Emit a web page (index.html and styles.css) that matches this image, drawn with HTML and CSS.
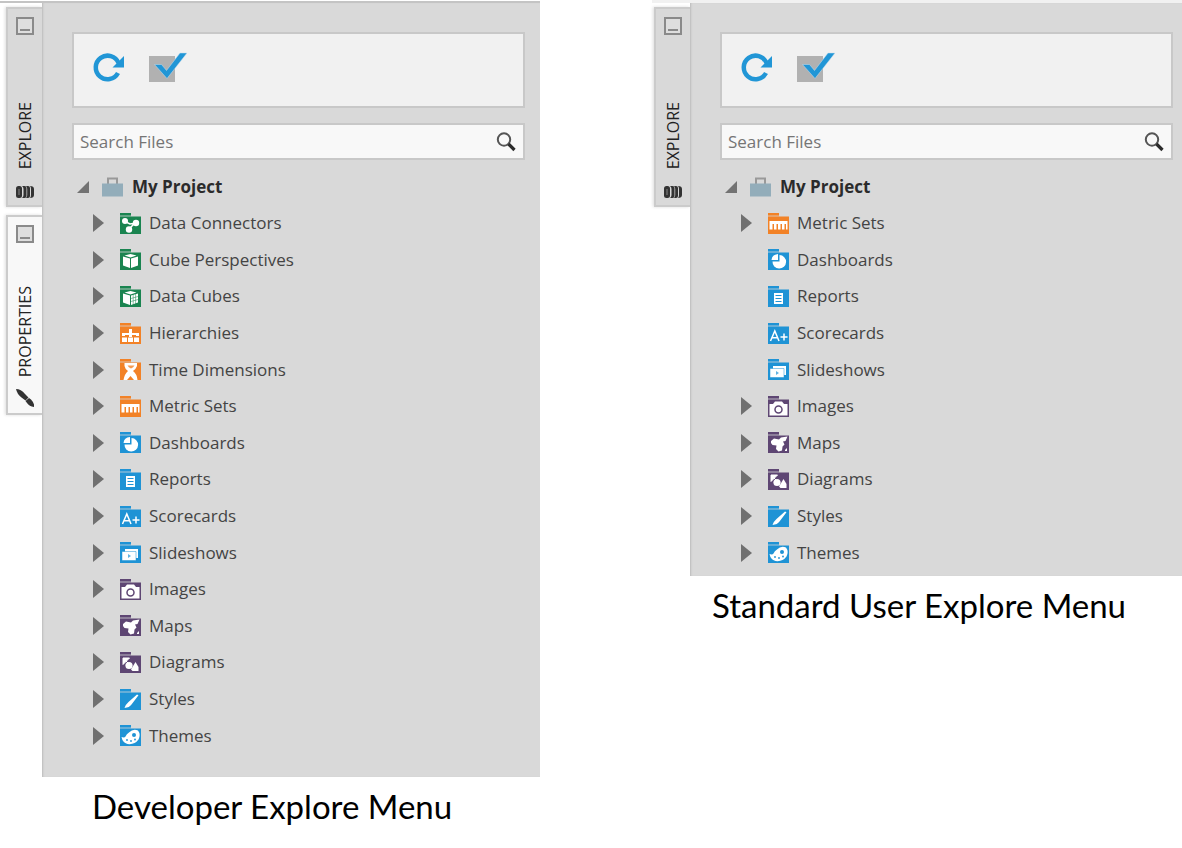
FILE: index.html
```html
<!DOCTYPE html>
<html lang="en">
<head>
<meta charset="utf-8">
<title>Explore Menu</title>
<link rel="stylesheet" href="styles.css">
</head>
<body>
<svg class="sprite" aria-hidden="true">
  <symbol id="minimize" viewBox="0 0 18 18"><path d="M1 1h16v16H1z" fill="#dedede" stroke="#8a8a8a" stroke-width="2"/><path d="M4 13h10" stroke="#8a8a8a" stroke-width="2"/></symbol>
  <symbol id="stack" viewBox="0 0 18 18"><rect x="0" y="5" width="6" height="12" rx="2.500" fill="#333"/><path d="M3 8v6" stroke="#888" stroke-width="1"/><path d="M6 5h2.500q2 0 2 2v8q0 2-2 2H6q1.500-1 1.500-3V8Q7.500 6 6 5zM10 5h2q2 0 2 2v8q0 2-2 2h-2q1.200-1 1.200-3V8q0-2-1.200-3zM14 5q4 0 4 3v6q0 3-4 3 1-1 1-3V8q0-2-1-3z" fill="#333"/></symbol>
  <symbol id="pen" viewBox="0 0 18 18"><path d="M0 0q5 0 9 5l3.500 3.500-3 3-4-3Q1 5 0 0zM13 9l2 1.500q3 3 3.500 7.500-5-.500-7.500-4l-1.500-2z" fill="#333"/></symbol>
  <symbol id="refresh" viewBox="0 0 32 32"><path d="M25.500 12A11.800 11.800 0 1 0 25 22" fill="none" stroke="#2196d6" stroke-width="4.500"/><path d="M31 5v11.500H19.500z" fill="#2196d6"/></symbol>
  <symbol id="check" viewBox="0 0 38 32"><path d="M0 5h26v26H0z" fill="#b1b1b1"/><path d="M5.500 13.500h7l5 6L31 2h7L18 27.500z" fill="#2196d6" stroke="#c5dfee" stroke-width=".5"/></symbol>
  <symbol id="search" viewBox="0 0 20 20"><circle cx="8" cy="7.500" r="6.200" fill="none" stroke="#555" stroke-width="2"/><path d="M12.500 12l6 6" stroke="#2b2b2b" stroke-width="3.200"/></symbol>
  <symbol id="expanded" viewBox="0 0 12 12"><path d="M12 0v12H0z" fill="#737373"/></symbol>
  <symbol id="collapsed" viewBox="0 0 11 18"><path d="M0 0l11 9-11 9z" fill="#707070"/></symbol>
  <symbol id="project" viewBox="0 0 21 21"><path d="M6 7V1.500h9V7" fill="none" stroke="#999" stroke-width="2"/><path d="M0 6.500h21v13H0z" fill="#93adba"/></symbol>
  <symbol id="folder" viewBox="0 0 21 21"><path d="M0 0h11v2.500H0zM0 3.500h21V21H0z" fill="currentColor"/><path d="M0 2.500h11v1H0z" fill="currentColor" opacity=".45"/></symbol>
  <symbol id="connectors" viewBox="0 0 21 21"><use href="#folder"/><path d="M5 8.500l5 2.500 6-1M14 11l-5 5" stroke="#fff" stroke-width="1.500" fill="none"/><g fill="#fff"><circle cx="5" cy="8" r="3"/><circle cx="16" cy="10" r="3.200"/><circle cx="9" cy="16.500" r="3.200"/></g></symbol>
  <symbol id="perspectives" viewBox="0 0 21 21"><use href="#folder"/><path d="M3 7.500L10 9.500v9.500L3 16.500zM18 7.500L11 9.500v9.500l7-2.500zM4.500 6.500L10.500 5l6 1.500-6 2z" fill="#fff"/></symbol>
  <symbol id="cubes" viewBox="0 0 21 21"><use href="#folder"/><path d="M3 7.500L10 9.500v9.500L3 16.500zM18 7.500L11 9.500v9.500l7-2.500zM4.500 6.500L10.500 5l6 1.500-6 2z" fill="#fff"/><path d="M13.200 8v11M15.600 8v10M11 12.500l7-2M11 15.500l7-2" stroke="currentColor" stroke-width=".5"/></symbol>
  <symbol id="hierarchies" viewBox="0 0 21 21"><use href="#folder"/><path d="M9 6h3v4h7v3h-3v-1h-4v2H9v-2H5v1H2v-3h7zM2 14.500h5V19H2zM8 14.500h5V19H8zM14 14.500h5V19h-5z" fill="#fff"/></symbol>
  <symbol id="time" viewBox="0 0 21 21"><use href="#folder"/><path d="M4.500 4h12.500v3q-1 3-4 5 4 3 4.500 9H14l-3.500-4L7 21H3.500q1-6 4.500-9-3-2-3.500-5z" fill="#fff"/><path d="M7.500 6.500h7q-1 2-3.500 3-2.500-1-3.500-3z" fill="currentColor" opacity=".8"/></symbol>
  <symbol id="metrics" viewBox="0 0 21 21"><use href="#folder"/><path d="M1.500 8h18v8.500H18V11h-1.500v5.500H14V11h-1.500v5.500H10V11H8.500v5.500H6V11H4.500v5.500h-3z" fill="#fff"/></symbol>
  <symbol id="dashboards" viewBox="0 0 21 21"><use href="#folder"/><path d="M11.500 6v6.500H4.500a6.800 6.800 0 1 0 7-6.500z" fill="#fff"/><path d="M10 5v6H3.500Q4 5.500 10 5z" fill="#fff"/></symbol>
  <symbol id="reports" viewBox="0 0 21 21"><use href="#folder"/><path d="M6 7h9v11H6z" fill="#fff"/><path d="M7.500 9.500h6M7.500 12.500h6M7.500 15.500h6" stroke="currentColor"/></symbol>
  <symbol id="scorecards" viewBox="0 0 21 21"><use href="#folder"/><path d="M2.500 18L6.800 8l4.200 10M4.200 14.700h5.200M12.500 14h7M16 10.500v7" fill="none" stroke="#fff" stroke-width="1.500"/></symbol>
  <symbol id="slideshows" viewBox="0 0 21 21"><use href="#folder"/><path d="M5 7h13v9H5z" fill="#fff"/><path d="M2 9.500h14v9H2z" fill="#fff" stroke="currentColor" stroke-width=".5"/><path d="M8 12l3 2-3 2z" fill="currentColor" opacity=".7"/></symbol>
  <symbol id="images" viewBox="0 0 21 21"><use href="#folder"/><path d="M1.500 8H5l2-2.500h7L16 8h3.500v11.500h-18z" fill="#fff"/><circle cx="10.500" cy="13.500" r="3.500" fill="none" stroke="currentColor" stroke-width="1.500"/></symbol>
  <symbol id="maps" viewBox="0 0 21 21"><use href="#folder"/><path d="M3 9l3-2.500 5 1L13 5.500l6.500-1-2 4.500-2.500.500 1.500 3-2 2-.500 4-3.500 1-2.500-2.500.500-3.500-4-.500-1.500-2zM17 18l2-2v3h-2z" fill="#fff"/></symbol>
  <symbol id="diagrams" viewBox="0 0 21 21"><use href="#folder"/><path d="M3 6h6.500L3 12.500zM6 9l4 4" fill="#fff" stroke="#fff"/><circle cx="9" cy="13.500" r="3.600" fill="#fff"/><path d="M11 17.500l4.500-7.500 3 5v4h-6z" fill="#fff"/></symbol>
  <symbol id="styles" viewBox="0 0 21 21"><use href="#folder"/><path d="M17 5.500l1.500.8-7 9.200q-2 3-7 3.500 1.500-4 4-6z" fill="#fff"/></symbol>
  <symbol id="themes" viewBox="0 0 21 21"><use href="#folder"/><path d="M9 7.500q4-4 9-2 3 4 .500 9-4 5.500-11 4.500-5-1.500-6-7 3 1 4-.500 1-2.500 3.500-4z" fill="#fff"/><g fill="currentColor"><circle cx="14" cy="10" r="2"/><circle cx="7" cy="15" r=".9"/><circle cx="11" cy="16" r=".9"/><circle cx="15" cy="14.500" r=".9"/></g></symbol>
</svg>

<main class="comparison">
  <figure class="menu menu-developer">
    <div class="window">
      <nav class="tabs" aria-label="Developer panels">
        <button class="tab tab-active"><svg class="tab-icon"><use href="#minimize"/></svg><span class="tab-label">EXPLORE</span><svg class="tab-icon"><use href="#stack"/></svg></button>
        <button class="tab"><svg class="tab-icon"><use href="#minimize"/></svg><span class="tab-label">PROPERTIES</span><svg class="tab-icon"><use href="#pen"/></svg></button>
      </nav>
      <section class="panel">
        <div class="toolbar">
          <button class="tool" aria-label="Refresh"><svg class="tool-refresh"><use href="#refresh"/></svg></button>
          <button class="tool" aria-label="Select"><svg class="tool-check"><use href="#check"/></svg></button>
        </div>
        <div class="search"><input class="search-input" type="text" placeholder="Search Files" aria-label="Search Files"><button class="tool" aria-label="Search"><svg class="search-icon"><use href="#search"/></svg></button></div>
        <div class="project"><button class="toggle" aria-label="Collapse My Project"><svg class="arrow-open"><use href="#expanded"/></svg></button><svg class="icon"><use href="#project"/></svg><span>My Project</span></div>
        <ul class="tree tree-full">
          <li class="item green"><button class="toggle" aria-label="Expand Data Connectors"><svg class="arrow"><use href="#collapsed"/></svg></button><svg class="icon"><use href="#connectors"/></svg><span class="name">Data Connectors</span></li>
          <li class="item green"><button class="toggle" aria-label="Expand Cube Perspectives"><svg class="arrow"><use href="#collapsed"/></svg></button><svg class="icon"><use href="#perspectives"/></svg><span class="name">Cube Perspectives</span></li>
          <li class="item green"><button class="toggle" aria-label="Expand Data Cubes"><svg class="arrow"><use href="#collapsed"/></svg></button><svg class="icon"><use href="#cubes"/></svg><span class="name">Data Cubes</span></li>
          <li class="item orange"><button class="toggle" aria-label="Expand Hierarchies"><svg class="arrow"><use href="#collapsed"/></svg></button><svg class="icon"><use href="#hierarchies"/></svg><span class="name">Hierarchies</span></li>
          <li class="item orange"><button class="toggle" aria-label="Expand Time Dimensions"><svg class="arrow"><use href="#collapsed"/></svg></button><svg class="icon"><use href="#time"/></svg><span class="name">Time Dimensions</span></li>
          <li class="item orange"><button class="toggle" aria-label="Expand Metric Sets"><svg class="arrow"><use href="#collapsed"/></svg></button><svg class="icon"><use href="#metrics"/></svg><span class="name">Metric Sets</span></li>
          <li class="item blue"><button class="toggle" aria-label="Expand Dashboards"><svg class="arrow"><use href="#collapsed"/></svg></button><svg class="icon"><use href="#dashboards"/></svg><span class="name">Dashboards</span></li>
          <li class="item blue"><button class="toggle" aria-label="Expand Reports"><svg class="arrow"><use href="#collapsed"/></svg></button><svg class="icon"><use href="#reports"/></svg><span class="name">Reports</span></li>
          <li class="item blue"><button class="toggle" aria-label="Expand Scorecards"><svg class="arrow"><use href="#collapsed"/></svg></button><svg class="icon"><use href="#scorecards"/></svg><span class="name">Scorecards</span></li>
          <li class="item blue"><button class="toggle" aria-label="Expand Slideshows"><svg class="arrow"><use href="#collapsed"/></svg></button><svg class="icon"><use href="#slideshows"/></svg><span class="name">Slideshows</span></li>
          <li class="item purple"><button class="toggle" aria-label="Expand Images"><svg class="arrow"><use href="#collapsed"/></svg></button><svg class="icon"><use href="#images"/></svg><span class="name">Images</span></li>
          <li class="item purple"><button class="toggle" aria-label="Expand Maps"><svg class="arrow"><use href="#collapsed"/></svg></button><svg class="icon"><use href="#maps"/></svg><span class="name">Maps</span></li>
          <li class="item purple"><button class="toggle" aria-label="Expand Diagrams"><svg class="arrow"><use href="#collapsed"/></svg></button><svg class="icon"><use href="#diagrams"/></svg><span class="name">Diagrams</span></li>
          <li class="item blue"><button class="toggle" aria-label="Expand Styles"><svg class="arrow"><use href="#collapsed"/></svg></button><svg class="icon"><use href="#styles"/></svg><span class="name">Styles</span></li>
          <li class="item blue"><button class="toggle" aria-label="Expand Themes"><svg class="arrow"><use href="#collapsed"/></svg></button><svg class="icon"><use href="#themes"/></svg><span class="name">Themes</span></li>
        </ul>
      </section>
    </div>
    <figcaption class="caption">Developer Explore Menu</figcaption>
  </figure>

  <figure class="menu menu-standard">
    <div class="window">
      <nav class="tabs" aria-label="Standard user panels">
        <button class="tab tab-active"><svg class="tab-icon"><use href="#minimize"/></svg><span class="tab-label">EXPLORE</span><svg class="tab-icon"><use href="#stack"/></svg></button>
      </nav>
      <section class="panel">
        <div class="toolbar">
          <button class="tool" aria-label="Refresh"><svg class="tool-refresh"><use href="#refresh"/></svg></button>
          <button class="tool" aria-label="Select"><svg class="tool-check"><use href="#check"/></svg></button>
        </div>
        <div class="search"><input class="search-input" type="text" placeholder="Search Files" aria-label="Search Files"><button class="tool" aria-label="Search"><svg class="search-icon"><use href="#search"/></svg></button></div>
        <div class="project"><button class="toggle" aria-label="Collapse My Project"><svg class="arrow-open"><use href="#expanded"/></svg></button><svg class="icon"><use href="#project"/></svg><span>My Project</span></div>
        <ul class="tree tree-short">
          <li class="item orange"><button class="toggle" aria-label="Expand Metric Sets"><svg class="arrow"><use href="#collapsed"/></svg></button><svg class="icon"><use href="#metrics"/></svg><span class="name">Metric Sets</span></li>
          <li class="item leaf blue"><svg class="icon"><use href="#dashboards"/></svg><span class="name">Dashboards</span></li>
          <li class="item leaf blue"><svg class="icon"><use href="#reports"/></svg><span class="name">Reports</span></li>
          <li class="item leaf blue"><svg class="icon"><use href="#scorecards"/></svg><span class="name">Scorecards</span></li>
          <li class="item leaf blue"><svg class="icon"><use href="#slideshows"/></svg><span class="name">Slideshows</span></li>
          <li class="item purple"><button class="toggle" aria-label="Expand Images"><svg class="arrow"><use href="#collapsed"/></svg></button><svg class="icon"><use href="#images"/></svg><span class="name">Images</span></li>
          <li class="item purple"><button class="toggle" aria-label="Expand Maps"><svg class="arrow"><use href="#collapsed"/></svg></button><svg class="icon"><use href="#maps"/></svg><span class="name">Maps</span></li>
          <li class="item purple"><button class="toggle" aria-label="Expand Diagrams"><svg class="arrow"><use href="#collapsed"/></svg></button><svg class="icon"><use href="#diagrams"/></svg><span class="name">Diagrams</span></li>
          <li class="item blue"><button class="toggle" aria-label="Expand Styles"><svg class="arrow"><use href="#collapsed"/></svg></button><svg class="icon"><use href="#styles"/></svg><span class="name">Styles</span></li>
          <li class="item blue"><button class="toggle" aria-label="Expand Themes"><svg class="arrow"><use href="#collapsed"/></svg></button><svg class="icon"><use href="#themes"/></svg><span class="name">Themes</span></li>
        </ul>
      </section>
    </div>
    <figcaption class="caption">Standard User Explore Menu</figcaption>
  </figure>
</main>
</body>
</html>
```

FILE: styles.css
```css
* { box-sizing: border-box; }

body {
  margin: 0;
  background: #fff;
  color: #444;
  font: 17px/24px "Open Sans", "Noto Sans", sans-serif;
}

button {
  padding: 0;
  border: 0;
  background: none;
  color: inherit;
  font: inherit;
}

svg { display: block; flex: none; }
.sprite { position: absolute; width: 0; height: 0; }

.comparison {
  display: grid;
  grid-template-columns: 540fr 530fr;
  column-gap: 112px;
  align-items: start;
}

.menu { margin: 0; }

.window {
  display: flex;
  border-top: 3px solid #f1f1f1;
}

.menu-developer .window {
  border-top: 2px solid #c4c4c4;
  margin-top: 1px;
}

.tabs {
  display: flex;
  flex-direction: column;
  gap: 8px;
  flex: none;
  padding: 4px 0 0 6px;
}

.menu-standard .tabs { padding-left: 2px; }

.tab {
  display: flex;
  flex-direction: column;
  align-items: center;
  width: 36px;
  min-height: 200px;
  padding: 8px 0 6px;
  border: 2px solid #cbcbcb;
  border-right: 0;
  background: #f8f8f8;
  color: #222;
  font-size: 16px;
  line-height: 20px;
  box-shadow: -1px 0 3px #ddd;
}

.tab-active { background: #d9d9d9; }
.tab-icon { width: 18px; height: 18px; }

.tab-label {
  margin: auto 0 12px;
  writing-mode: vertical-rl;
  transform: rotate(180deg);
}

.panel {
  flex: 1;
  min-width: 0;
  padding: 29px 15px 23px 30px;
  background: #d9d9d9;
  box-shadow: inset 2px 0 2px -1px #bbb;
}

.menu-standard .panel { padding-right: 9px; padding-bottom: 5px; }

.toolbar {
  display: flex;
  align-items: center;
  gap: 24px;
  height: 76px;
  padding: 0 19px 6px;
  border: 2px solid #c8c8c8;
  background: #f1f1f1;
}

.tool-refresh { width: 32px; height: 32px; }
.tool-check { width: 38px; height: 32px; }

.search {
  display: flex;
  align-items: center;
  height: 37px;
  margin-top: 15px;
  padding: 0 7px 0 6px;
  border: 2px solid #c8c8c8;
  background: #f8f8f8;
}

.search-input {
  flex: 1;
  min-width: 0;
  padding: 0;
  border: 0;
  background: none;
  color: #444;
  font: inherit;
}

.search-input::placeholder { color: #757575; }
.search-icon { width: 20px; height: 20px; }

.project {
  display: flex;
  align-items: center;
  height: 36px;
  margin-top: 9px;
  padding-left: 5px;
  color: #2b2b2b;
  font-size: 17px;
  font-weight: 700;
}

.arrow-open { width: 12px; height: 12px; }
.project .icon { margin: 0 9px 0 13px; }
.icon { width: 21px; height: 21px; }
.arrow { width: 11px; height: 18px; }

.tree {
  display: grid;
  grid-auto-rows: 1fr;
  margin: 0;
  padding: 0 0 0 21px;
  list-style: none;
}

.tree-full { min-height: 549px; }
.tree-short { min-height: 366px; }
.item { display: flex; align-items: center; }
.item .icon { margin: 0 8px 0 16px; }
.leaf { padding-left: 11px; }
.name { color: #444; }

.green { color: #1a8450; }
.orange { color: #f28227; }
.blue { color: #1f93d5; }
.purple { color: #5e4673; }

.caption {
  padding: 8px 0 0 92px;
  color: #000;
  font: 33px/42px Lato, sans-serif;
}

.menu-standard .caption { padding-left: 60px; }
```
